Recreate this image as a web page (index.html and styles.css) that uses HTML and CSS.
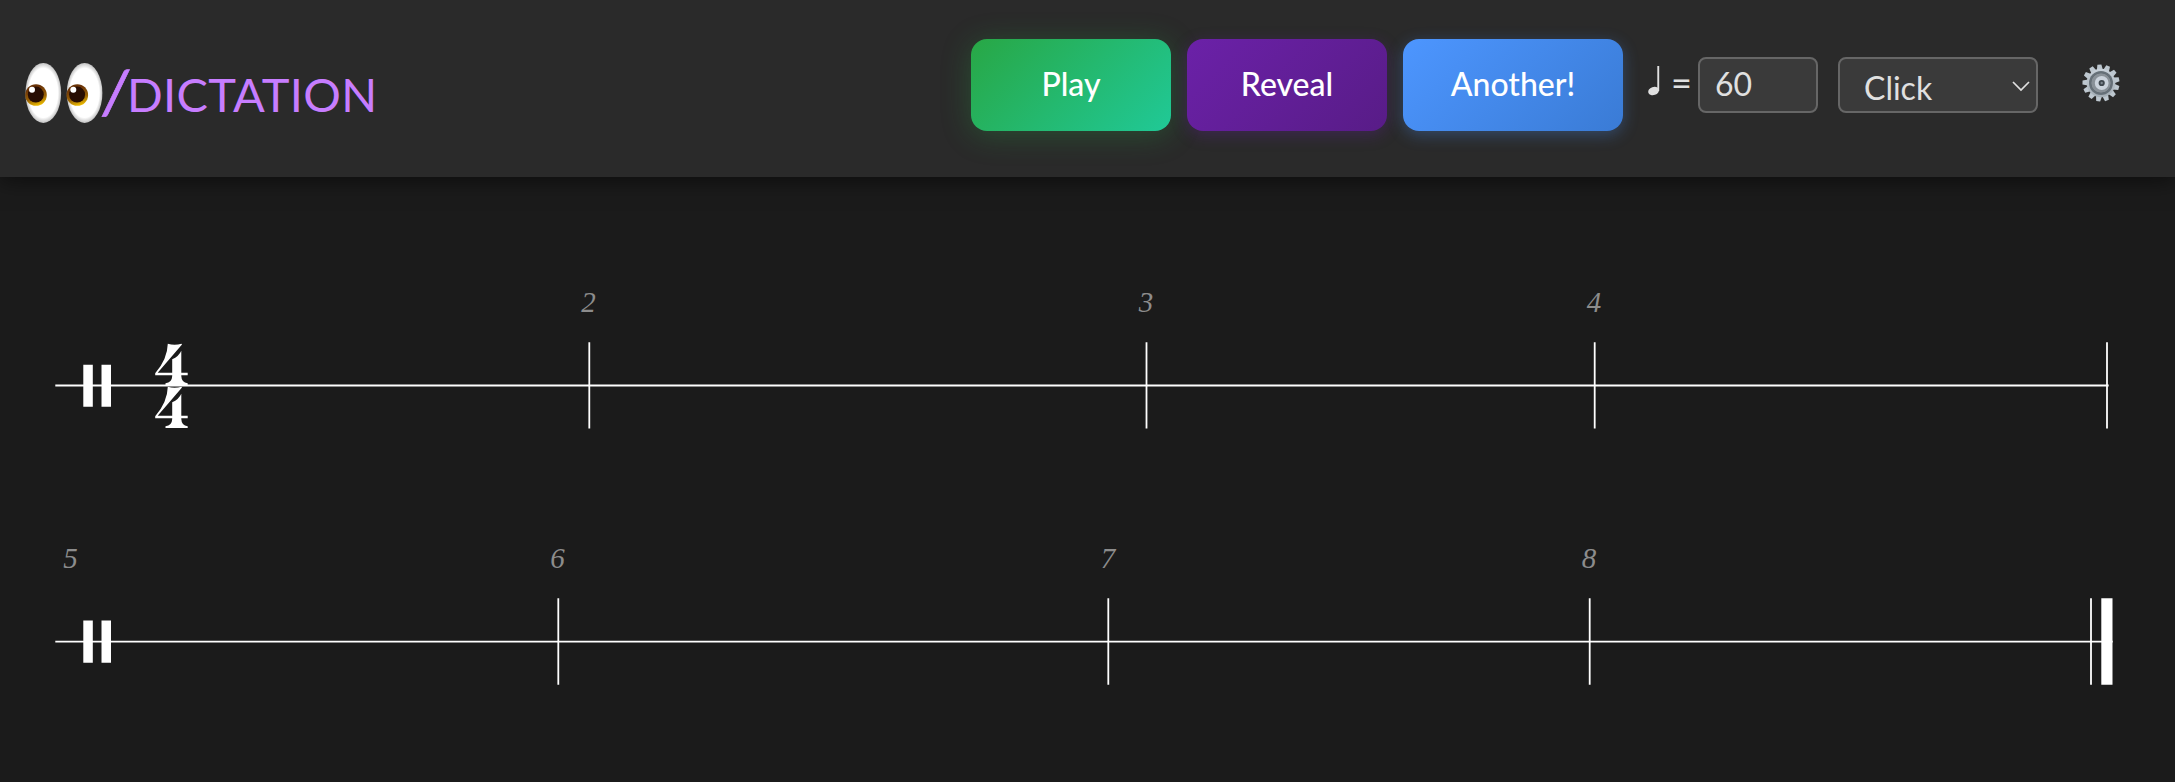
FILE: index.html
```html
<!DOCTYPE html>
<html lang="en">
<head>
<meta charset="utf-8">
<title>Dictation</title>
<link rel="stylesheet" href="styles.css">
</head>
<body>
<header class="bar">
  <h1 class="brand">
    <svg class="eyes" width="78" height="62" viewBox="0 0 78 62" aria-hidden="true">
      <defs>
        <radialGradient id="white"><stop offset=".82" stop-color="#fff"/><stop offset="1" stop-color="#c2c2c2"/></radialGradient>
        <linearGradient id="iris" x1=".3" y1="0" x2=".6" y2="1"><stop offset=".2" stop-color="#6b3407"/><stop offset=".65" stop-color="#9a6205"/><stop offset="1" stop-color="#f0c000"/></linearGradient>
        <g id="eye">
          <ellipse cx="18.3" cy="30.9" rx="17.8" ry="30" fill="url(#white)"/>
          <circle cx="11" cy="33" r="10.8" fill="url(#iris)"/>
          <circle cx="10.8" cy="32.6" r="8" fill="#280d02"/>
          <circle cx="7" cy="27.8" r="3" fill="#fff"/>
        </g>
      </defs>
      <use href="#eye"/><use href="#eye" x="41.3"/>
    </svg>
    <span class="slash">/</span><span class="word">DICTATION</span>
  </h1>
  <div class="controls">
    <button class="btn play">Play</button>
    <button class="btn reveal">Reveal</button>
    <button class="btn another">Another!</button>
    <label class="tempo">
      <svg class="note" width="12" height="32" viewBox="0 0 12 32" aria-hidden="true"><path d="M9.3 1h1.9v25h-1.9z"/><ellipse cx="5.6" cy="26" rx="5.5" ry="4.1" transform="rotate(-20 5.6 26)"/></svg>
      <span class="equals">=</span>
      <span class="field bpm">60</span>
    </label>
    <div class="field sound"><span>Click</span>
      <svg width="18" height="11" viewBox="0 0 18 11" aria-hidden="true"><path d="M1 1l8 8 8-8" fill="none" stroke="#e0e0e0" stroke-width="1.7"/></svg>
    </div>
    <svg class="gear" width="38" height="38" viewBox="-19 -19 38 38" aria-hidden="true">
      <defs>
        <path id="tooth" d="M-3 -13L-2 -18.5H2L3 -13Z"/>
        <linearGradient id="steel" x2="0" y2="1"><stop stop-color="#c9d2da"/><stop offset="1" stop-color="#a3adb5"/></linearGradient>
      </defs>
      <g fill="#bdc7cf">
        <use href="#tooth" transform="rotate(-5)"/><use href="#tooth" transform="rotate(22.7)"/><use href="#tooth" transform="rotate(50.4)"/><use href="#tooth" transform="rotate(78.1)"/><use href="#tooth" transform="rotate(105.8)"/><use href="#tooth" transform="rotate(133.5)"/><use href="#tooth" transform="rotate(161.2)"/><use href="#tooth" transform="rotate(188.8)"/><use href="#tooth" transform="rotate(216.5)"/><use href="#tooth" transform="rotate(244.2)"/><use href="#tooth" transform="rotate(271.9)"/><use href="#tooth" transform="rotate(299.6)"/><use href="#tooth" transform="rotate(327.3)"/>
      </g>
      <circle r="14.3" fill="url(#steel)"/>
      <circle r="12" fill="#68727a"/>
      <circle r="10.2" fill="#899198" stroke="#626c74" stroke-width="1"/>
      <circle cx=".7" r="5" fill="#3f474e" stroke="#cbd3dc" stroke-width="3.8"/>
      <circle cx=".7" r="1.2" fill="#7d878f"/>
    </svg>
  </div>
</header>
<main>
  <svg class="score" width="2175" height="605" viewBox="0 177 2175 605">
    <g class="rules">
      <path d="M55.3 385.5H2108.7M589.3 342.2V428.6M1146.5 342.2V428.6M1594.7 342.2V428.6M2107 342.2V428.6"/>
      <path d="M55.3 641.7H2112.7M558.3 598.2V684.8M1108.3 598.2V684.8M1589.7 598.2V684.8M2091 598.2V684.8"/>
    </g>
    <g class="solid">
      <path d="M83.3 364.7h9.5v42h-9.5zM101.5 364.7h9.5v42h-9.5zM83.3 620.4h9.5v42.3h-9.5zM101.5 620.4h9.5v42.3h-9.5zM2101.3 598.2h11.2v86.6h-11.2z"/>
      <g id="four"><path d="M167.8 343.7Q174.5 345.8 181.5 343.7L182 344.5L157.7 372.7H187.7V375.2H155.2V373.3Q167.4 359 167.8 343.7Z"/><path d="M181.3 350.7V376Q181.5 382.5 187.7 383.3V385H165.5V383.3Q172 382.5 172.2 376V359.2Q178.8 356.4 181.3 350.7Z"/></g>
      <use href="#four" y="43"/>
    </g>
    <g class="numbers">
      <text x="588.5" y="312">2</text><text x="1146" y="312">3</text><text x="1594" y="312">4</text>
      <text x="70.5" y="568">5</text><text x="557.5" y="568">6</text><text x="1108" y="568">7</text><text x="1589" y="568">8</text>
    </g>
  </svg>
</main>
</body>
</html>
```
FILE: styles.css
```css
* { box-sizing: border-box; }
body { margin: 0; height: 782px; overflow: hidden; background: #1b1b1b; color: #e0e0e0; font-family: Lato, sans-serif; }
.bar { position: relative; display: flex; align-items: flex-start; justify-content: space-between; height: 177px; padding: 39px 55px 0 25px; background: #2a2a2a; box-shadow: 0 4px 20px rgba(0, 0, 0, .5); }
.brand { display: flex; margin: 0; font-weight: 400; color: #c77dff; line-height: 60px; }
.eyes { margin-top: 23px; }
.slash { width: 24px; padding-top: 22px; font-size: 60px; font-weight: 500; -webkit-text-stroke: .7px #c77dff; transform: skewX(-5deg); }
.word { padding-top: 25px; font-size: 47px; letter-spacing: .3px; }
.controls { display: flex; align-items: flex-start; }
.btn { width: 200px; height: 92px; margin-right: 16px; padding: 0 0 4px; border: 0; border-radius: 16px; font: 500 32px Lato, sans-serif; color: #fff; }
.play { background: linear-gradient(135deg, #28a745, #20c997); box-shadow: 0 4px 30px rgba(40, 167, 69, .3); }
.reveal { background: linear-gradient(135deg, #6b21a8, #581c87); box-shadow: 0 4px 16px rgba(107, 33, 168, .3); }
.another { width: 220px; margin-right: 25px; background: linear-gradient(135deg, #4d96ff, #3a7bd5); box-shadow: 0 4px 16px rgba(77, 150, 255, .3); }
.tempo { display: flex; height: 56px; margin: 18px 20px 0 0; }
.note { margin-top: 8px; fill: #e0e0e0; }
.equals { width: 32px; padding-left: 11px; margin-right: 6px; font-size: 36px; line-height: 51px; }
.field { display: flex; height: 56px; border: 2px solid #666; border-radius: 8px; background: #3a3a3a; font-size: 32px; }
.bpm { width: 120px; padding-left: 15px; line-height: 50px; }
.sound { align-items: center; justify-content: space-between; width: 200px; margin: 18px 44px 0 0; padding: 4px 6px 0 24px; }
.sound svg { margin-bottom: 2px; }
.gear { margin-top: 25px; }
main { height: 605px; }
.score { display: block; }
.rules { fill: none; stroke: #fff; stroke-width: 1.8; }
.solid { fill: #fff; }
.numbers { fill: #8c8c8c; font: italic 29px "Liberation Serif", serif; text-anchor: middle; }
```
